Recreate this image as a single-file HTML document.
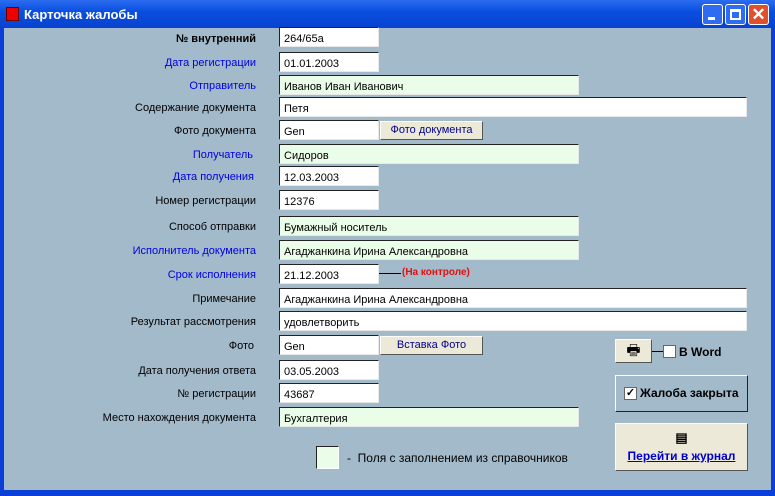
<!DOCTYPE html>
<html><head><meta charset="utf-8"><style>
*{box-sizing:border-box;margin:0;padding:0}
body{width:775px;height:496px;overflow:hidden;background:#0a3fd8;font-family:"Liberation Sans",Arial,sans-serif;font-size:11px;position:relative}
#title{position:absolute;left:0;top:0;width:775px;height:28px;background:linear-gradient(#2c6cf0,#0a4fe0 40%,#0842cf);color:#fff;font-weight:bold;font-size:13px}
#client{position:absolute;left:4px;top:28px;width:767px;height:462px;background:#a3bacb}
.a{position:absolute}
.lbl{position:absolute;text-align:right;width:240px;left:16px;line-height:14px}
.b{color:#0000e0}
.f{position:absolute;left:279px;height:20px;background:#fff;border-top:1px solid #222;border-left:1px solid #222;border-right:1px solid #e8e8e8;border-bottom:1px solid #e8e8e8;padding:5px 0 0 4px;line-height:13px;white-space:nowrap}
.g{background:#eafde8}
.btn{position:absolute;background:#ece9d8;border:1px solid #fff;border-right-color:#555;border-bottom-color:#555;text-align:center;color:#00008b;line-height:17px}
.tb{position:absolute;top:4px;width:21px;height:21px;border:1px solid #fff;border-radius:3px;background:#2f6cf2}
</style></head><body>
<div id="title">
<div class="a" style="left:6px;top:7px;width:13px;height:14px;background:#e00;border:1px solid #600"></div>
<div class="a" style="left:24px;top:7px">Карточка жалобы</div>
<div class="tb" style="left:702px"><div class="a" style="left:5px;top:12px;width:7px;height:3px;background:#fff"></div></div>
<div class="tb" style="left:725px"><div class="a" style="left:4px;top:4px;width:11px;height:11px;border:2px solid #fff;border-top-width:3px"></div></div>
<div class="tb" style="left:748px;background:#e0502a;color:#fff;font-size:17px;text-align:center;line-height:19px">✕</div>
</div>
<div id="client"></div>
<div class="lbl" style="top:32px;font-weight:bold">№ внутренний</div>
<div class="f" style="top:27px;width:100px">264/65a</div>
<div class="lbl b" style="top:56px">Дата регистрации</div>
<div class="f" style="top:52px;width:100px">01.01.2003</div>
<div class="lbl b" style="top:79px">Отправитель</div>
<div class="f g" style="top:75px;width:300px">Иванов Иван Иванович</div>
<div class="lbl" style="top:101px">Содержание документа</div>
<div class="f" style="top:97px;width:468px">Петя</div>
<div class="lbl" style="top:124px">Фото документа</div>
<div class="f" style="top:120px;width:100px">Gen</div>
<div class="btn" style="left:380px;top:121px;width:103px;height:19px">Фото документа</div>
<div class="lbl b" style="top:148px;width:237px">Получатель</div>
<div class="f g" style="top:144px;width:300px">Сидоров</div>
<div class="lbl b" style="top:170px;width:238px">Дата получения</div>
<div class="f" style="top:166px;width:100px">12.03.2003</div>
<div class="lbl" style="top:194px">Номер регистрации</div>
<div class="f" style="top:190px;width:100px">12376</div>
<div class="lbl" style="top:220px">Способ отправки</div>
<div class="f g" style="top:216px;width:300px">Бумажный носитель</div>
<div class="lbl b" style="top:244px">Исполнитель документа</div>
<div class="f g" style="top:240px;width:300px">Агаджанкина Ирина Александровна</div>
<div class="lbl b" style="top:268px">Срок исполнения</div>
<div class="f" style="top:264px;width:100px">21.12.2003</div>
<div class="a" style="left:379px;top:273px;width:22px;height:1px;background:#000"></div>
<div class="a" style="left:402px;top:267px;color:#e01010;font-weight:bold;font-size:10px">(На контроле)</div>
<div class="lbl" style="top:292px">Примечание</div>
<div class="f" style="top:288px;width:468px">Агаджанкина Ирина Александровна</div>
<div class="lbl" style="top:315px">Результат рассмотрения</div>
<div class="f" style="top:311px;width:468px">удовлетворить</div>
<div class="lbl" style="top:339px;width:238px">Фото</div>
<div class="f" style="top:335px;width:100px">Gen</div>
<div class="btn" style="left:380px;top:336px;width:103px;height:19px">Вставка Фото</div>
<div class="lbl" style="top:364px">Дата получения ответа</div>
<div class="f" style="top:360px;width:100px">03.05.2003</div>
<div class="lbl" style="top:387px">№ регистрации</div>
<div class="f" style="top:383px;width:100px">43687</div>
<div class="lbl" style="top:411px">Место нахождения документа</div>
<div class="f g" style="top:407px;width:300px">Бухгалтерия</div>
<div class="a" style="left:316px;top:446px;width:23px;height:23px;background:#eafde8;border-top:1px solid #222;border-left:1px solid #222;border-right:1px solid #fff;border-bottom:1px solid #fff"></div>
<div class="a" style="left:347px;top:451px;font-size:12px">-&nbsp; Поля с заполнением из справочников</div>
<div class="btn" style="left:615px;top:339px;width:37px;height:24px;color:#000;font-size:15px;line-height:21px">🖶</div>
<div class="a" style="left:652px;top:351px;width:11px;height:1px;background:#000"></div>
<div class="a" style="left:663px;top:345px;width:13px;height:13px;background:#fff;border:1px solid #666"></div>
<div class="a" style="left:679px;top:345px;font-weight:bold;font-size:12px">B Word</div>
<div class="a" style="left:615px;top:375px;width:133px;height:37px;border:1px solid #fff;border-right-color:#222;border-bottom-color:#222"></div>
<div class="a" style="left:624px;top:387px;width:13px;height:13px;background:#fff;border:1px solid #666;font-size:11px;line-height:11px;text-align:center;font-weight:bold">✓</div>
<div class="a" style="left:640px;top:386px;font-weight:bold;font-size:12px">Жалоба закрыта</div>
<div class="btn" style="left:615px;top:423px;width:133px;height:48px;line-height:14px;font-weight:bold;font-size:12px;color:#0000cc">
<div style="margin-top:7px;color:#000;font-size:13px">▤</div>
<div style="margin-top:4px;text-decoration:underline">Перейти в журнал</div></div>
</body></html>
